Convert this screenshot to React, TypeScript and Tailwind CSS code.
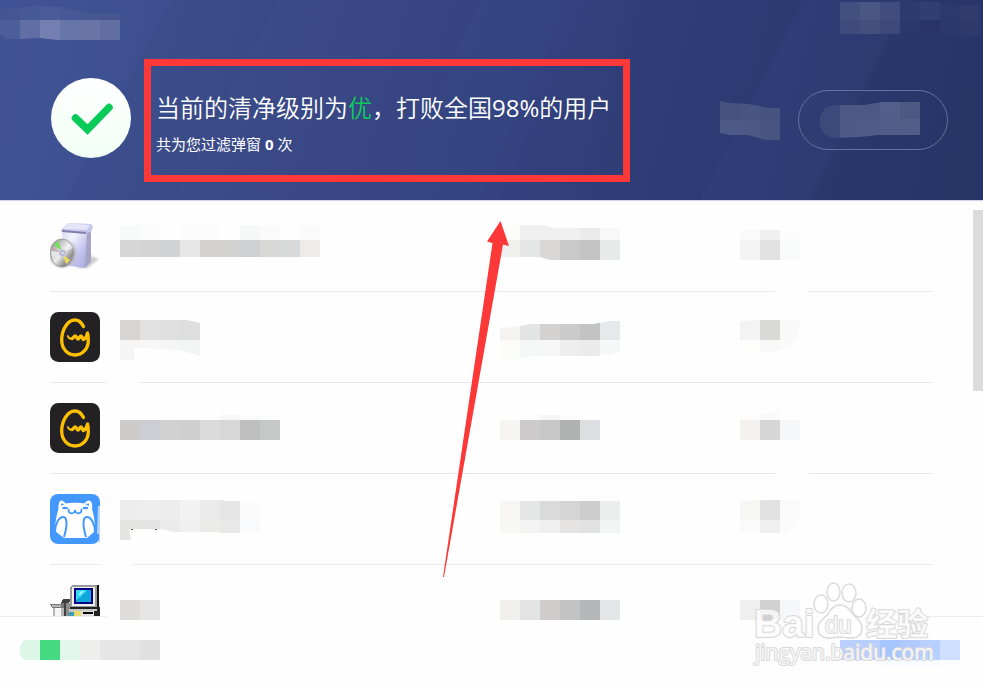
import React from "react";

type Band = { y: number; h: number; x?: number; colors: string[] };
type Redaction = { bands: Band[]; outline?: string };

const CELL = 20;

/** Pixelated block that hides private text. Coordinates are relative to its row. */
function Mosaic({ data, id, width, height, className = "" }: {
  data: Redaction; id: string; width: number; height: number; className?: string;
}) {
  return (
    <svg aria-hidden="true" width={width} height={height} className={`block shrink-0 overflow-visible ${className}`} shapeRendering="crispEdges">
      {data.outline && <clipPath id={id}><polygon points={data.outline} /></clipPath>}
      <g clipPath={data.outline ? `url(#${id})` : undefined}>
        {data.bands.map((b, i) =>
          b.colors.map((c, j) =>
            c ? <rect key={`${i}-${j}`} x={(b.x ?? 0) + j * CELL} y={b.y} width={CELL} height={b.h} fill={c} /> : null,
          ),
        )}
      </g>
    </svg>
  );
}

function InstallerIcon() {
  return (
    <svg viewBox="0 0 50 50" className="size-[50px]" aria-hidden="true">
      <defs>
        <linearGradient id="boxFront" x1="0" y1="0" x2="1" y2="1">
          <stop offset="0" stopColor="#d9d8f5" /><stop offset="0.3" stopColor="#f3f3fc" /><stop offset="0.65" stopColor="#c4c3ee" /><stop offset="1" stopColor="#a9a8dc" />
        </linearGradient>
        <linearGradient id="disc" x1="0" y1="0" x2="1" y2="1">
          <stop offset="0" stopColor="#808383" /><stop offset="0.3" stopColor="#c4c4c4" /><stop offset="0.5" stopColor="#efefef" /><stop offset="0.75" stopColor="#8e8e8e" /><stop offset="1" stopColor="#c6c6c6" />
        </linearGradient>
        <filter id="soft"><feGaussianBlur stdDeviation="1" /></filter>
      </defs>
      <path d="M26 47 39 34l10 4-11 9z" fill="#aaa" opacity=".55" filter="url(#soft)" />
      <path d="m12 10 26-1v34l-3 4-23-3z" fill="url(#boxFront)" />
      <path d="m37 10 4-2v33l-6 6z" fill="#a6a5c6" />
      <path d="m11 9 7-7 23 1 2 3-2 5-5 1-25-2z" fill="#c6c5eb" />
      <path d="m18 2 22 2-3 5-24-1z" fill="#e5e4f8" />
      <path d="m12 9 24 2v2L12 11z" fill="#827fac" />
      <circle cx="12.500" cy="32.500" r="14" fill="#aaa" opacity=".6" filter="url(#soft)" />
      <ellipse cx="12" cy="32" rx="11.500" ry="14" fill="url(#disc)" stroke="#8a8a8a" strokeWidth=".7" />
      <path d="M12 30 4 24l4-4z" fill="#77e05a" />
      <path d="m13 34 3 9 4-4z" fill="#eedb58" />
      <path d="M12 32 1 30l1 6z" fill="#e4e6e8" />
      <path d="m12 32 11-5-3-5z" fill="#f5f5f5" opacity=".6" />
      <path d="M12 32 1 28l1-2z" fill="#c9a1a9" />
      <circle cx="12.500" cy="32" r="3.500" fill="#b6b5d6" stroke="#d3d3df" strokeWidth="1" />
      <circle cx="12.500" cy="32" r="1.300" fill="#d9daf2" />
    </svg>
  );
}

function EggIcon() {
  return (
    <svg viewBox="0 0 50 50" className="size-[50px]" aria-hidden="true">
      <rect width="50" height="50" rx="8.500" fill="#242124" />
      <path d="M33.500 14.500C31.500 10.500 29 8 25 8c-7.500 0-13.300 10-13.300 20 0 9 6 15 13.300 15s13.300-6 13.300-14.500c0-3-.2-5.500-.8-7.500-.5 3-2 5.500-4 6.500-1 0-1.500-3.500-2.500-3.500s-2 3-3 3-1.500-3-2.800-3-2 2.500-3.200 2.500" fill="none" stroke="#fcc000" strokeWidth="3.300" strokeLinejoin="round" strokeLinecap="round" />
      <path d="M22.500 26.500c-2.500.8-4-.5-4.700-2.500" fill="none" stroke="#fcc000" strokeWidth="1.800" strokeLinecap="round" />
    </svg>
  );
}

function CatIcon() {
  return (
    <svg viewBox="0 0 50 50" className="size-[50px]" aria-hidden="true">
      <rect width="50" height="50" rx="8" fill="#4398ff" />
      <path d="M8.500 15C8 8 10 5 13 7l3 2.500C20 8.500 30 8.500 34 9.500L37 7c4-2 6 2 5 8 2 6 3 14 3 22l-8 7H14l-9-7c0-8 1.500-16 3.500-22z" fill="#fff" />
      <path d="M5 38c0-8 4-15 8-15 5 0 4 10 1 20m31-5c0-8-4-15-8-15-5 0-4 10-1 20" fill="none" stroke="#4398ff" strokeWidth="2" />
      <path d="M18.500 15.500c0 5 6 5 6.500.5.500 4.500 6.500 4.500 6.500-.5" fill="none" stroke="#4398ff" strokeWidth="1.800" strokeLinecap="round" />
      <path d="m11 9.500 3.500.5-3 2zm28 0-4 .5 4 2z" fill="#4398ff" />
      <ellipse cx="15" cy="14" rx="3" ry="1.300" fill="#4398ff" /><ellipse cx="35.500" cy="14" rx="3" ry="1.300" fill="#4398ff" />
      <path d="M48 12h2v37h-1v-9h-2z" fill="#b4d6ff" />
    </svg>
  );
}

function ComputerIcon() {
  return (
    <svg viewBox="0 0 50 31" className="h-[31px] w-[50px]" aria-hidden="true" shapeRendering="crispEdges">
      <path d="M0 19h11l3-5h7v3h-5v14h-5V23H2z" fill="#777" />
      <path d="M2 20h9v2H2zm1 3h2v8H3zm8 0h5v8h-5z" fill="#b6b6b6" />
      <path d="M5 24h6v7H5z" fill="#f4f4f4" />
      <path d="M13 14h7v3l-4 2v12h-2V18h-3z" fill="#404040" />
      <path d="M16 18h4v13h-4z" fill="#8d8d8d" />
      <path d="M22 0h27v23H22l-2-3V2z" fill="#111" />
      <path d="M22 0h25v22H20V2z" fill="#9a9a9a" />
      <path d="M22 2h23v19H22z" fill="#f1f1ef" />
      <path d="M24 3h19v16H24z" fill="#000082" />
      <path d="M26 5h15v12H26z" fill="#11a7dc" />
      <path d="M26 5h12l-8 7-4 3z" fill="#35daf8" />
      <path d="m28 9 3-3h3l-4 5z" fill="#9cf4ff" />
      <path d="M20 22h30v9H20z" fill="#222" />
      <path d="M19 24h28v2H19zm0 2h13v5H19z" fill="#c9c9c4" />
      <path d="M24 26h7v5h-7z" fill="#e5db70" /><path d="M19 27h5v4h-5z" fill="#399dbc" />
      <path d="M31 26h13v5H31z" fill="#e0e0e0" /><path d="M33 27h10v2H33z" fill="#000" />
    </svg>
  );
}

type Row = { icon: () => React.ReactElement; name: Redaction; publisher: Redaction; count: Redaction };

const rows: Row[] = [
  {
    icon: InstallerIcon,
    name: { bands: [
      { y: 24, h: 15, colors: ["#f8faf9", "#fcfcfc", "", "#fcfcfc", "#fcfcfc", "", "#f6f8f8", "#fbfbfb", "", "#fbfbfb"] },
      { y: 39, h: 17, colors: ["#d6d6d6", "#d4d4d4", "#d2d3d4", "#e7e7e7", "#d4d3d2", "#d2d2d1", "#cfd0d2", "#d8d8d7", "#d7d9db", "#eeebe9", "#fdfdfd"] },
    ] },
    publisher: {
      outline: "0,24 44,24 54,27 120,27 120,59 50,59 40,56 0,56",
      bands: [
        { y: 24, h: 15, colors: ["#fcfcfa", "#f0f0f0", "#f0f0f0", "#f0f0f0", "#ebebeb", "#f8f8f8"] },
        { y: 39, h: 20, colors: ["#f2f0ee", "#e5e7e6", "#d9d8d7", "#c9c9c9", "#c3c4c3", "#e8eaea"] },
      ] },
    count: {
      outline: "0,29 40,29 60,32 60,59 0,59",
      bands: [{ y: 29, h: 10, colors: ["#fafafa", "#f0f0f0", "#fcfcfc"] }, { y: 39, h: 20, colors: ["#f4f4f4", "#e1e1e1", "#f9fbfa"] }] },
  },
  {
    icon: EggIcon,
    name: {
      outline: "0,28 67,28 80,31 100,34 100,66 80,64 60,58 13,56 15,68 0,68",
      bands: [
        { y: 28, h: 20, colors: ["#d6d5d4", "#e1e1e1", "#e0e0e0", "#dedede"] },
        { y: 48, h: 20, colors: ["#f5f5f5", "#f8f8f8", "#f5f5f5", "#f3f5f4", "#fdfdfd"] },
      ] },
    publisher: {
      outline: "0,36 16,35 30,32 93,32 110,29 120,29 120,61 95,64 34,64 16,68 0,68",
      bands: [
        { y: 28, h: 20, colors: ["#f4f3f1", "#e3e5e4", "#d4d3d2", "#cbcbcb", "#c3c3c3", "#e7e8ea"] },
        { y: 48, h: 20, colors: ["#fcfcfa", "#f5f8f7", "#f6f6f6", "#eeeeee", "#ebebeb", "#f5f8f7"] },
      ] },
    count: {
      outline: "0,29 20,28 60,28 58,44 52,54 42,59 0,61",
      bands: [{ y: 28, h: 20, colors: ["#f3f3f3", "#d9d9d8", "#f9f9f9"] }, { y: 48, h: 14, colors: ["#fdfdfa", "#f8f8f9", "#fafafa"] }] },
  },
  {
    icon: EggIcon,
    name: { bands: [
      { y: 32, h: 5, x: 100, colors: ["#f7f7f7", "#fbfbfb", "#fbfbfb"] },
      { y: 37, h: 20, colors: ["#cecccb", "#cdced3", "#d0d1d0", "#cfcfcf", "#dbdbdb", "#d7d7d7", "#bfbfbf", "#c6c8c7"] },
    ] },
    publisher: { bands: [
      { y: 32, h: 5, x: 20, colors: ["#fcfcfc", "#f6f6f6", "#fcfcfc"] },
      { y: 37, h: 20, colors: ["#f6f5f3", "#cfcbcc", "#c8c8c8", "#b0b2b1", "#dddee1"] },
    ] },
    count: {
      outline: "0,32 24,31 40,27 40,37 60,37 60,57 0,57",
      bands: [{ y: 27, h: 10, colors: ["#fdfdfd", "#fafafa"] }, { y: 37, h: 20, colors: ["#f3f2f0", "#d6d6d6", "#f6f7f9"] }] },
  },
  {
    icon: CatIcon,
    name: {
      outline: "0,26 103,26 103,27 140,27 140,59 100,59 100,58 54,58 40,55 9,55 11,66 0,66",
      bands: [
        { y: 26, h: 20, colors: ["#ededed", "#eeeeee", "#ececec", "#f2f2f2", "#eaeaea", "#e6e6e6", "#fbfbfb"] },
        { y: 46, h: 20, colors: ["#e4e4e2", "#e3e4e3", "#ebebeb", "#f0f0f0", "#ebebe9", "#e8e8e8", "#f8fafc"] },
      ] },
    publisher: { bands: [
      { y: 27, h: 19, colors: ["#f7f6f4", "#e4e6e5", "#dadada", "#d5d5d5", "#cdcdcd", "#eceeed"] },
      { y: 46, h: 13, colors: ["#f7f7f5", "#f3f3f3", "#efefef", "#e5e4e2", "#e1e1e1", "#f3f5f4"] },
    ] },
    count: {
      outline: "0,27 30,26 60,26 60,48 54,56 46,59 0,59",
      bands: [{ y: 26, h: 20, colors: ["#f6f6f3", "#e1e1e1", "#fafafa"] }, { y: 46, h: 13, colors: ["#fafafa", "#f0f0f0", "#fbfbfb"] }] },
  },
  {
    icon: ComputerIcon,
    name: { bands: [{ y: 35, h: 20, colors: ["#dedddc", "#e5e5e5"] }] },
    publisher: { bands: [{ y: 35, h: 20, colors: ["#f1efed", "#e1e4e2", "#cfcccb", "#c3c3c3", "#b6b7b9", "#e4e6e8"] }] },
    count: { bands: [{ y: 35, h: 20, colors: ["#efefef", "#d0d0d0", "#f6f7f9"] }] },
  },
];

const titleLeft: Redaction = {
  outline: "0,12 6,8 20,7 40,6 60,7 80,12 100,14 120,14 120,40 57,40 40,38 20,39 6,39 0,34",
  bands: [
    { y: 6, h: 14, colors: ["#435693", "#475995", "#4b5b97", "#485896", "#475792", "#475691"] },
    { y: 20, h: 20, colors: ["#4c5e99", "#606ea5", "#727fb0", "#6776a9", "#6a75a8", "#626ea2"] },
  ] };
const titleRight: Redaction = {
  outline: "0,2 100,2 100,4 140,5 140,36 120,37 100,34 0,34",
  bands: [
    { y: 2, h: 18, colors: ["#425080", "#4a5783", "#404d7e", "#2c3b6e", "#313e71", "#2c396c", "#313b6d"] },
    { y: 20, h: 17, colors: ["#3e4b7c", "#444f7e", "#3d497b", "#2b386b", "#283467", "#2b386b", "#2f3a6c"] },
  ] };
const linkMosaic: Redaction = {
  outline: "0,1 10,3 28,4 50,8 60,8 60,40 46,40 28,35 10,35 0,33",
  bands: [{ y: 0, h: 20, colors: ["#465380", "#485580", "#465280"] }, { y: 20, h: 20, colors: ["#4d5a87", "#4c5985", "#485580"] }] };
const pillMosaic: Redaction = {
  outline: "0,14 5,6 14,3 44,3 62,0 100,0 100,33 58,33 40,35 12,36 4,32 0,24",
  bands: [{ y: 0, h: 17, colors: ["#3b4a7b", "#4c5984", "#4c5984", "#525f8a", "#4c5882"] }, { y: 17, h: 20, colors: ["#3b4a7b", "#4d5b86", "#4f5c87", "#505d88", "#515e87"] }] };
const statusMosaic: Redaction = {
  outline: "0,6 4,0 140,0 140,20 4,20 0,14",
  bands: [{ y: 0, h: 20, colors: ["#dcf7e8", "#45da82", "#e2f7eb", "#eeeeec", "#e6e6e6", "#e5e5e5", "#e0e0e0"] }] };
const footerLink: Redaction = {
  bands: [{ y: 0, h: 20, colors: ["#b9cfff", "#b9cfff", "#a6c4ff", "#b0caff", "#b8d0ff", "#cfdfff"] }, { y: 20, h: 6, x: 20, colors: ["#fcfdff", "#f8fbff", "#f8fbff", "#f8fbff", "#fcfdff"] }] };

function Header() {
  return (
    <header className="relative h-[201px] overflow-hidden border-b border-[#cfd5e7] bg-linear-[105deg,#405396_0%,#3b4b88_25%,#344380_52%,#2d3b73_75%,#263364_100%] text-white">
      <svg className="absolute inset-0 size-full" viewBox="0 0 983 200" preserveAspectRatio="none" aria-hidden="true">
        <path d="M55 0h117L65 200H0v-20z" fill="#4967a8" opacity=".06" />
        <path d="M172 0h104L175 200H65z" fill="#25376f" opacity=".05" />
        <path d="M480 0h90L480 200H390z" fill="#5370b4" opacity=".04" />
        <path d="M590 0h213L700 200H500z" fill="#1d326e" opacity=".06" />
        <path d="M803 0h105L810 200H700z" fill="#4861a5" opacity=".08" />
      </svg>
      <div className="relative flex h-10 justify-between pr-[3px]">
        <Mosaic id="title-left" data={titleLeft} width={120} height={40} />
        <Mosaic id="title-right" data={titleRight} width={140} height={40} />
      </div>
      <div className="relative flex h-40 items-center pr-[35px] pl-[51px]">
        <svg viewBox="0 0 80 80" className="mb-1 size-20 shrink-0" role="img" aria-label="状态良好">
          <defs><linearGradient id="badge" x2="0" y2="1"><stop stopColor="#fff" /><stop offset="1" stopColor="#f2fff6" /></linearGradient></defs>
          <circle cx="40" cy="40" r="40" fill="url(#badge)" />
          <path d="M24.500 40 36.500 51.500 58 29.500" fill="none" stroke="#09cb59" strokeWidth="7.500" strokeLinecap="round" />
        </svg>
        <div className="ml-[13px] w-[486px] shrink-0 border-[7px] border-[#fc3838] pt-6 pb-[19px] pl-[5px]">
          <h1 className="text-2xl/9 font-[350] whitespace-nowrap">当前的清净级别为<span className="text-[#0ccb5d]">优</span>，打败全国<span className="font-normal">98%</span>的用户</h1>
          <p className="mt-1.5 text-[15px]/6 whitespace-nowrap">共为您过滤弹窗 <b>0</b> 次</p>
        </div>
        <a href="#records" aria-label="记录" className="ml-auto"><Mosaic id="link" data={linkMosaic} width={60} height={40} /></a>
        <button type="button" aria-label="操作" className="ml-[18px] flex h-[60px] w-[150px] items-center rounded-full border border-[#66719b] pl-[21px]">
          <Mosaic id="pill" data={pillMosaic} width={100} height={36} />
        </button>
      </div>
    </header>
  );
}

function Watermark() {
  return (
    <svg className="absolute right-[49px] bottom-[18px] z-30 h-[92px] w-[184px] overflow-visible" viewBox="750 578 184 92" aria-label="Baidu 经验">
      <g fill="#fff" fillOpacity=".72" stroke="#dadada" strokeWidth="1.500">
        <ellipse cx="821" cy="604" rx="7" ry="9" /><ellipse cx="833.500" cy="592" rx="6.500" ry="9" />
        <ellipse cx="849" cy="593" rx="7" ry="9" /><ellipse cx="859" cy="608" rx="7" ry="9" />
        <path d="M840 605c-7 0-9 5-12 9-4 5-10 7-10 14 0 6 4 10 10 10 5 0 8-1 12-1s7 1 12 1c6 0 10-4 10-10 0-7-5-9-9-14-3-4-6-9-13-9z" />
      </g>
      <g fill="#fff" fillOpacity=".8" stroke="#d9d9d9" strokeLinejoin="round" className="[paint-order:stroke]">
        <text x="754" y="637" fontSize="39" fontWeight="700" strokeWidth="2" fontFamily="Liberation Sans, sans-serif">Bai</text>
        <text x="825" y="633" fontSize="24" fontWeight="400" strokeWidth="2" fontFamily="Liberation Sans, sans-serif">du</text>
        <text x="866" y="635" fontSize="31" fontWeight="700" strokeWidth="2" fontFamily="Noto Sans CJK SC, sans-serif">经验</text>
        <text x="755" y="660" fontSize="21" fontWeight="400" strokeWidth="2" fontFamily="Open Sans, sans-serif">jingyan.baidu.com</text>
      </g>
    </svg>
  );
}

export default function App() {
  return (
    <div className="relative flex min-h-screen flex-col overflow-hidden bg-[#fefefe] font-['Open_Sans','Noto_Sans_CJK_SC',sans-serif]">
      <Header />
      <main className="flex">
        <ul className="min-w-0 flex-1 pr-10 pl-[50px]">
          {rows.map(({ icon: Icon, name, publisher, count }, i) => (
            <li key={i} className="grid h-[91px] grid-cols-[70px_380px_240px_1fr] border-b border-[#e9e9e9] last:h-[51px] last:border-b-0">
              <div className={i === rows.length - 1 ? "self-end" : "self-center"}><Icon /></div>
              <Mosaic id={`name-${i}`} data={name} width={220} height={50} className="relative z-10" />
              <Mosaic id={`publisher-${i}`} data={publisher} width={120} height={50} className="relative z-10" />
              <Mosaic id={`count-${i}`} data={count} width={60} height={50} className="relative z-10" />
            </li>
          ))}
        </ul>
        <div className="w-[10px] pt-[9px]"><div className="h-[181px] bg-[#dcdcdc]" /></div>
      </main>
      <footer className="flex flex-1 items-start justify-between border-t border-[#eeeeee] px-5 pt-[23px] pr-[23px] pb-7">
        <Mosaic id="status" data={statusMosaic} width={140} height={20} />
        <a href="#settings" aria-label="设置"><Mosaic id="footer-link" data={footerLink} width={120} height={20} /></a>
      </footer>
      <svg className="pointer-events-none absolute top-0 left-0" width="983" height="688" viewBox="0 0 983 688" aria-hidden="true">
        <path d="M776 280h32l-2 20h-32zM106 380h33v20h-31zM778 460h32l-2 20h-33zM101 560h32v20h-32zM106 615h822v3H106z" fill="#fdfdfd" />
      </svg>
      <svg className="pointer-events-none absolute top-0 left-0 z-20" width="983" height="688" viewBox="0 0 983 688" aria-hidden="true">
        <path d="M131 529h2v1h-2zM155 529h2v1h-2z" fill="#74574e" />
        <path d="M500.500 221 509 246 503 244.500 444 577h-1L492.500 243 487 241.500z" fill="#fc3838" />
      </svg>
      <Watermark />
    </div>
  );
}
